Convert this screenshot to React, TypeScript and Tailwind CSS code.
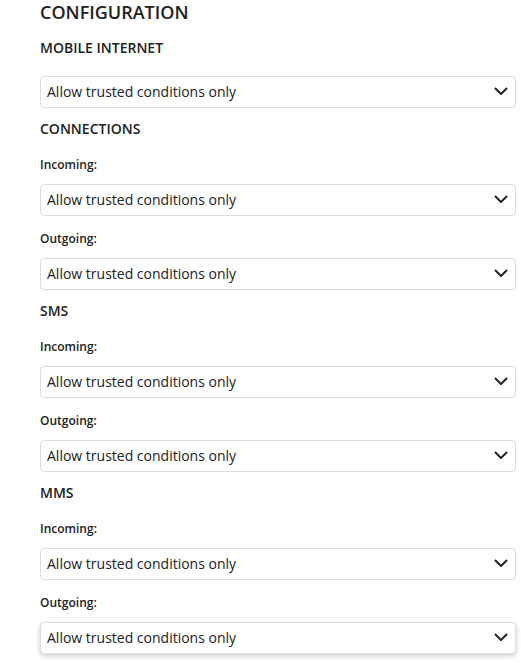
const OPTION = "Allow trusted conditions only";

function Select({ shadow = false }: { shadow?: boolean }) {
  return (
    <div
      className={`flex h-8 items-center justify-between rounded-[4px] border border-[#dcdcdc] bg-white pb-[2px] pl-[6px] pr-[7px] text-[14px] text-[#222] ${
        shadow ? "shadow-[0_2px_5px_rgba(0,0,0,0.2)]" : ""
      }`}
    >
      <span>{OPTION}</span>
      <svg width="14" height="9" viewBox="0 0 14 9" fill="none" className="mt-[1px]">
        <path d="M1.5 1.5 L7 7 L12.5 1.5" stroke="#222" strokeWidth="2" strokeLinecap="round" strokeLinejoin="round" />
      </svg>
    </div>
  );
}

function Section({ title, first }: { title: string; first?: boolean }) {
  return (
    <h3 className={`h-5 text-[14px] leading-5 font-semibold text-[#222] ${first ? "mt-[14px]" : "mt-[11px]"}`}>
      {title}
    </h3>
  );
}

function Label({ text, gap }: { text: string; gap: string }) {
  return <div className={`h-4 text-[12px] leading-4 font-semibold text-[#222] ${gap}`}>{text}</div>;
}

function Pair() {
  return (
    <>
      <Label text="Incoming:" gap="mt-[18px]" />
      <div className="mt-[11px]">
        <Select />
      </div>
      <Label text="Outgoing:" gap="mt-[15px]" />
      <div className="mt-[11px]">
        <Select />
      </div>
    </>
  );
}

export default function App() {
  return (
    <div className="min-h-screen bg-white pl-10 pr-[5px] font-['Open_Sans',sans-serif]">
      <h2 className="h-6 text-[18px] leading-6 font-semibold text-[#222]">CONFIGURATION</h2>
      <Section title="MOBILE INTERNET" first />
      <div className="mt-[18px]">
        <Select />
      </div>
      <Section title="CONNECTIONS" />
      <Pair />
      <Section title="SMS" />
      <Pair />
      <Section title="MMS" />
      <Label text="Incoming:" gap="mt-[18px]" />
      <div className="mt-[11px]">
        <Select />
      </div>
      <Label text="Outgoing:" gap="mt-[15px]" />
      <div className="mt-[11px]">
        <Select shadow />
      </div>
    </div>
  );
}
